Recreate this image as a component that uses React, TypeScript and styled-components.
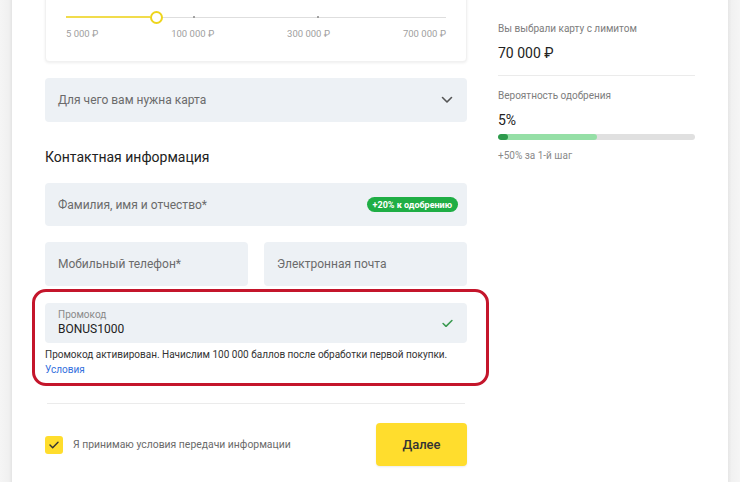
import React from "react";
import styled, { createGlobalStyle } from "styled-components";

const Global = createGlobalStyle`
  html, body { margin: 0; padding: 0; background: #fff; }
  body { font-family: Roboto, "Liberation Sans", Arial, sans-serif; }
  * { box-sizing: border-box; }
`;

const Page = styled.div`
  display: flex;
  width: 740px;
  height: 482px;
  overflow: hidden;
  background: #fff;
`;

const SideStrip = styled.div<{ $side: "left" | "right" }>`
  flex: 0 0 12px;
  background: ${(p) =>
    p.$side === "left"
      ? "linear-gradient(to right, #f5f5f5 0%, #f0f0f0 75%, #e4e4e4 100%)"
      : "linear-gradient(to right, #e6e6e6 0%, #f1f1f1 30%, #f5f5f5 100%)"};
`;

const Main = styled.div`
  flex: 1;
  display: flex;
  padding: 0 33px;
  gap: 31px;
`;

const LeftCol = styled.div`
  width: 422px;
  display: flex;
  flex-direction: column;
`;

const RightCol = styled.div`
  width: 197px;
  display: flex;
  flex-direction: column;
  padding-top: 22px;
`;

/* Slider card */
const SliderCard = styled.div`
  margin-top: -14px;
  padding: 24px 20px 21px;
  background: #fff;
  border: 1px solid #f1f1f1;
  border-radius: 4px;
  box-shadow: 0 1px 3px rgba(0, 0, 0, 0.07);
`;

const Track = styled.div`
  position: relative;
  height: 12px;
`;

const TrackLine = styled.div`
  position: absolute;
  left: 0;
  right: 0;
  top: 6px;
  height: 1px;
  background: #dedede;
`;

const TrackFill = styled.div`
  position: absolute;
  left: 0;
  top: 5px;
  height: 2px;
  background: #f1dc4c;
`;

const Tick = styled.div`
  position: absolute;
  top: 5px;
  width: 2px;
  height: 2px;
  border-radius: 50%;
  background: #888;
`;

const Thumb = styled.div`
  position: absolute;
  top: -0.5px;
  width: 13px;
  height: 13px;
  margin-left: -6.5px;
  border-radius: 50%;
  border: 2px solid #eed51c;
  background: #fff;
`;

const ScaleLabels = styled.div`
  margin-top: 5px;
  display: flex;
  justify-content: space-between;
  font-size: 9.5px;
  line-height: 12px;
  color: #a0a0a0;
`;

/* Fields */
const Field = styled.div<{ $mt?: number; $h?: number }>`
  margin-top: ${(p) => p.$mt ?? 16}px;
  height: ${(p) => p.$h ?? 44}px;
  background: #edf1f5;
  border-radius: 4px;
  padding: 0 14px 0 13px;
  display: flex;
  align-items: center;
  justify-content: space-between;
  font-size: 12px;
  color: #6b6b6b;
`;

const FieldRow = styled.div`
  margin-top: 16px;
  display: grid;
  grid-template-columns: 1fr 1fr;
  gap: 16px;
`;

const Heading = styled.div`
  margin-top: 25px;
  font-size: 14px;
  line-height: 20px;
  color: #222;
`;

const Badge = styled.span`
  display: inline-flex;
  align-items: center;
  height: 15px;
  padding: 0 6px;
  border-radius: 8px;
  background: #1fae45;
  color: #fff;
  font-size: 9px;
  font-weight: 700;
  margin-right: -5px;
`;

const PromoFrame = styled.div`
  margin: 3px -22px 0 -13px;
  padding: 11px 19px 6px 10px;
  border: 3px solid #c4152b;
  border-radius: 14px;
`;

const PromoField = styled.div`
  height: 40px;
  background: #edf1f5;
  border-radius: 4px;
  padding: 0 14px 0 13px;
  display: flex;
  align-items: center;
  justify-content: space-between;
`;

const PromoTexts = styled.div`
  display: flex;
  flex-direction: column;
`;

const PromoLabel = styled.span`
  font-size: 10px;
  line-height: 12px;
  color: #8a8a8a;
`;

const PromoValue = styled.span`
  font-size: 12px;
  line-height: 17px;
  color: #222;
`;

const Note = styled.div`
  margin-top: 4px;
  font-size: 10px;
  line-height: 15px;
  color: #333;
  white-space: nowrap;
`;

const Link = styled.a`
  display: block;
  font-size: 10px;
  line-height: 15px;
  color: #336fdd;
  text-decoration: none;
`;

const Divider = styled.div<{ $mt: number; $inset?: number }>`
  margin: ${(p) => p.$mt}px ${(p) => p.$inset ?? 0}px 0;
  height: 1px;
  background: #ebebeb;
`;

const BottomRow = styled.div`
  margin-top: 19px;
  display: flex;
  align-items: center;
  justify-content: space-between;
`;

const Agree = styled.label`
  display: flex;
  align-items: center;
  gap: 10px;
  font-size: 10.4px;
  color: #6a6a6a;
`;

const CheckBox = styled.span`
  width: 18px;
  height: 18px;
  border-radius: 3px;
  background: #ffdd2d;
  display: inline-flex;
  align-items: center;
  justify-content: center;
`;

const NextButton = styled.button`
  width: 91px;
  height: 43px;
  border: none;
  border-radius: 4px;
  background: #ffdd2d;
  font-family: inherit;
  font-size: 13px;
  font-weight: 500;
  color: #333;
  box-shadow: 0 1px 2px rgba(0, 0, 0, 0.08);
`;

/* Right panel */
const InfoLabel = styled.div<{ $mt?: number }>`
  margin-top: ${(p) => p.$mt ?? 0}px;
  font-size: 10px;
  line-height: 14px;
  color: #7d7d7d;
`;

const InfoValue = styled.div`
  margin-top: 8px;
  font-size: 14px;
  line-height: 18px;
  color: #222;
`;

const Progress = styled.div`
  margin-top: 5px;
  height: 6px;
  border-radius: 3px;
  background: #e0e0e0;
  overflow: hidden;
  display: flex;
`;

const ProgressSeg = styled.div<{ $color: string }>`
  height: 100%;
  background: ${(p) => p.$color};
  border-radius: 3px;
`;

const SmallNote = styled.div`
  margin-top: 10px;
  font-size: 10px;
  line-height: 12px;
  color: #8a8a8a;
`;

const Chevron = () => (
  <svg width="12" height="8" viewBox="0 0 12 8">
    <polyline points="1.5,1.5 6,6 10.5,1.5" fill="none" stroke="#555" strokeWidth="1.6" strokeLinecap="round" strokeLinejoin="round" />
  </svg>
);

const Check = ({ color, size = 11 }: { color: string; size?: number }) => (
  <svg width={size} height={size * 0.8} viewBox="0 0 11 9">
    <polyline points="1,4.6 4,7.5 10,1.5" fill="none" stroke={color} strokeWidth="1.6" strokeLinecap="round" strokeLinejoin="round" />
  </svg>
);

export default function App() {
  const thumbPos = 90;
  return (
    <>
      <Global />
      <Page>
        <SideStrip $side="left" />
        <Main>
          <LeftCol>
            <SliderCard>
              <Track>
                <TrackLine />
                <TrackFill style={{ width: thumbPos - 6 }} />
                <Tick style={{ left: 127 }} />
                <Tick style={{ left: 251 }} />
                <Thumb style={{ left: thumbPos }} />
              </Track>
              <ScaleLabels>
                <span>5 000 ₽</span>
                <span>100 000 ₽</span>
                <span>300 000 ₽</span>
                <span>700 000 ₽</span>
              </ScaleLabels>
            </SliderCard>

            <Field>
              <span>Для чего вам нужна карта</span>
              <Chevron />
            </Field>

            <Heading>Контактная информация</Heading>

            <Field $h={43}>
              <span>Фамилия, имя и отчество*</span>
              <Badge>+20% к одобрению</Badge>
            </Field>

            <FieldRow>
              <Field $mt={0}>
                <span>Мобильный телефон*</span>
              </Field>
              <Field $mt={0}>
                <span>Электронная почта</span>
              </Field>
            </FieldRow>

            <PromoFrame>
              <PromoField>
                <PromoTexts>
                  <PromoLabel>Промокод</PromoLabel>
                  <PromoValue>BONUS1000</PromoValue>
                </PromoTexts>
                <Check color="#3a9a50" />
              </PromoField>
              <Note>Промокод активирован. Начислим 100 000 баллов после обработки первой покупки.</Note>
              <Link>Условия</Link>
            </PromoFrame>

            <Divider $mt={17} $inset={2} />

            <BottomRow>
              <Agree>
                <CheckBox>
                  <Check color="#333" size={10} />
                </CheckBox>
                Я принимаю условия передачи информации
              </Agree>
              <NextButton>Далее</NextButton>
            </BottomRow>
          </LeftCol>

          <RightCol>
            <InfoLabel>Вы выбрали карту с лимитом</InfoLabel>
            <InfoValue>70 000 ₽</InfoValue>
            <Divider $mt={13} />
            <InfoLabel $mt={13}>Вероятность одобрения</InfoLabel>
            <InfoValue>5%</InfoValue>
            <Progress>
              <ProgressSeg $color="#95dfa6" style={{ width: "50.5%" }}>
                <ProgressSeg $color="#2d9a4c" style={{ width: 10 }} />
              </ProgressSeg>
            </Progress>
            <SmallNote>+50% за 1-й шаг</SmallNote>
          </RightCol>
        </Main>
        <SideStrip $side="right" />
      </Page>
    </>
  );
}
